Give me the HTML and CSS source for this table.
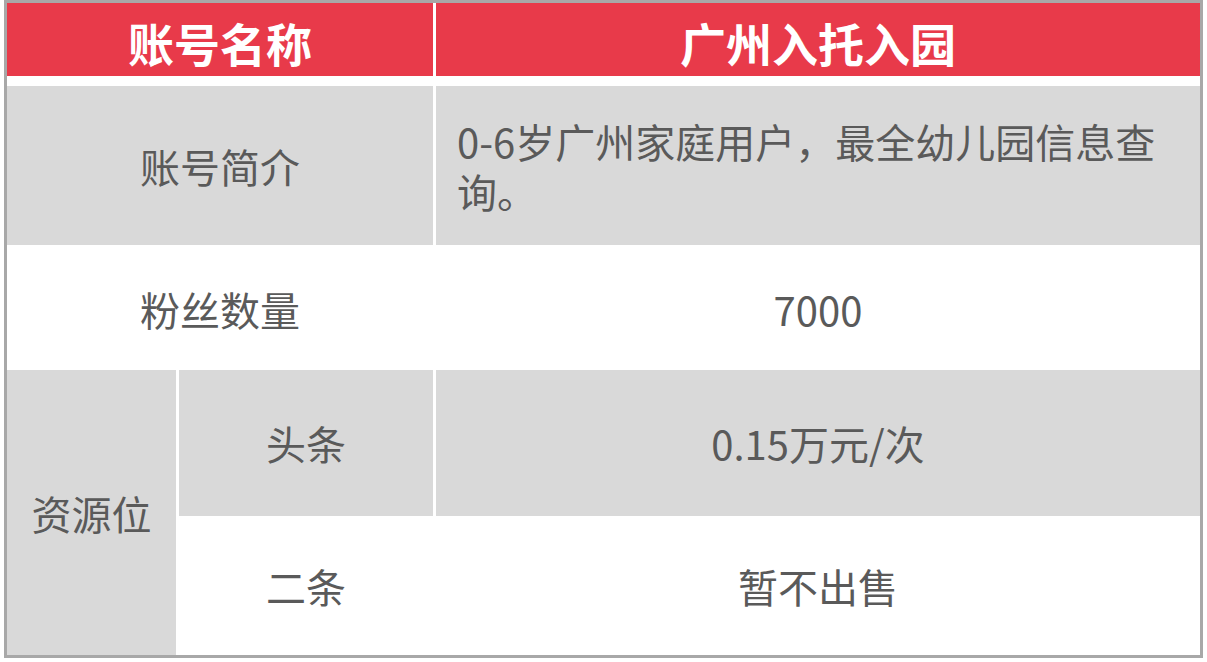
FILE: index.html
```html
<!DOCTYPE html>
<html lang="zh-CN">
<head>
<meta charset="utf-8">
<title>广州入托入园</title>
<link rel="stylesheet" href="styles.css">
</head>
<body>
<div class="sheet">
  <div class="cell head span2">账号名称</div>
  <div class="cell head col3">广州入托入园</div>

  <div class="cell gray span2 r1">账号简介</div>
  <div class="cell gray col3 r1 intro">0-6岁广州家庭用户，最全幼儿园信息查询。</div>

  <div class="cell white span2">粉丝数量</div>
  <div class="cell white col3">7000</div>

  <div class="cell gray res">资源位</div>
  <div class="cell gray col2">头条</div>
  <div class="cell gray col3">0.15万元/次</div>

  <div class="cell white col2">二条</div>
  <div class="cell white col3">暂不出售</div>
</div>
</body>
</html>
```

FILE: styles.css
```css
html, body {
  margin: 0;
  padding: 0;
  background: #ffffff;
}

.sheet {
  margin-left: 4px;
  width: 1193px;
  border: 3px solid #a8a8a8;
  background: #ffffff;
  display: grid;
  grid-template-columns: 169px 254px 764px;
  grid-template-rows: 83px 161px 123px 146px 139px;
  column-gap: 3px;
  font-family: "Noto Sans CJK SC", "Noto Sans", sans-serif;
  color: #5a5a5a;
  font-size: 40px;
}

.cell {
  display: flex;
  align-items: center;
  justify-content: center;
  line-height: 1.3;
}

.head {
  background: #e83a4a;
  color: #ffffff;
  font-weight: 700;
  font-size: 46px;
  margin-bottom: 10px;
  padding-top: 6px;
}

.span2 { grid-column: 1 / 3; }
.col2 { grid-column: 2; }
.col3 { grid-column: 3; }

.gray { background: #d9d9d9; }
.white { background: #ffffff; }

.r1 { margin-bottom: 2px; }

.intro {
  justify-content: flex-start;
  padding: 0 30px 0 21px;
  line-height: 50px;
}

.res {
  grid-column: 1;
  grid-row: 4 / 6;
}
```
